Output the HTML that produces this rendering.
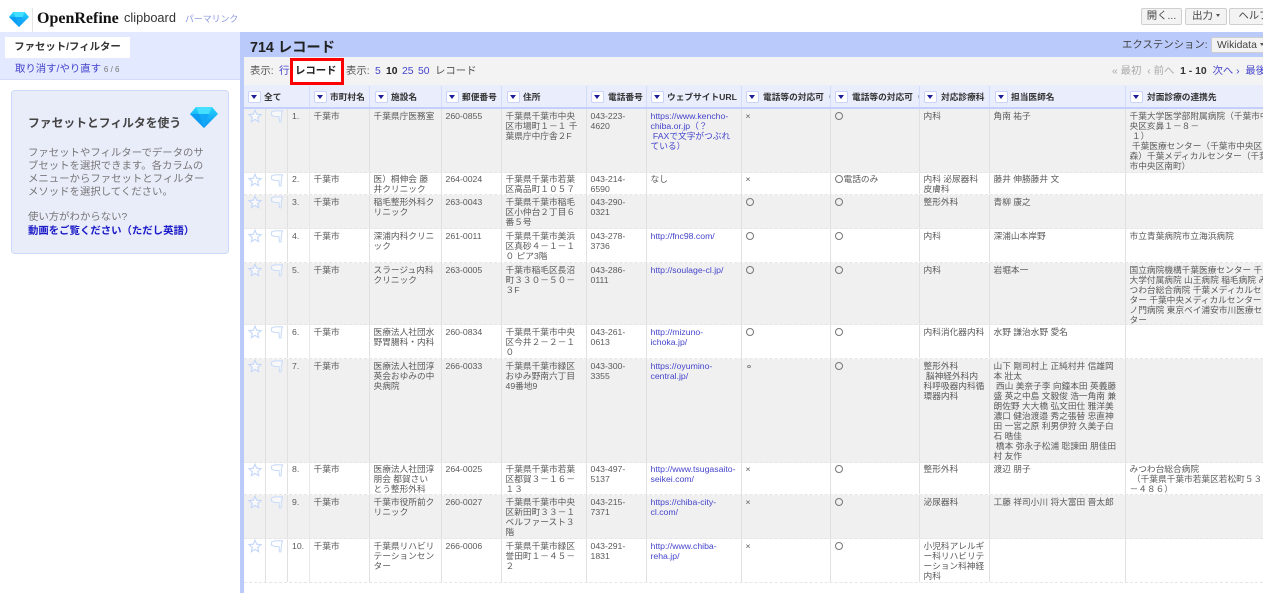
<!DOCTYPE html>
<html lang="ja">
<head>
<meta charset="utf-8">
<title>OpenRefine clipboard</title>
<style>
*{box-sizing:border-box}
html,body{margin:0;padding:0;width:1263px;height:593px;overflow:hidden;background:#fff}
body{position:relative;font-family:"Liberation Sans","Noto Sans CJK JP",sans-serif;color:#444}
a{color:#4444cc;text-decoration:none}
.a{position:absolute;white-space:nowrap}
.btn{position:absolute;background:#f3f3f3;border:1px solid #cfcfcf;border-radius:2px;font-size:10.4px;line-height:16px;color:#444;white-space:nowrap;overflow:hidden;text-align:center}
.caret{display:inline-block;border:2.5px solid transparent;border-top:3px solid #555;border-bottom:0;vertical-align:2px;margin-left:3px}
.r{position:absolute;left:244px;width:1019px;border-bottom:1px dashed #e6e6e6;overflow:hidden}
.g{background:#f0f0f0}
.r>span{position:absolute;top:0;bottom:0;font-size:8.7px;line-height:10px;padding:1.5px 0 0 3.5px;white-space:nowrap;overflow:hidden;color:#5a5a5a;border-right:1px solid #e0e0e0}
.t>span{padding-top:.5px}
.c1{left:0;width:22px}.c2{left:22px;width:22px}.c3{left:44px;width:22px}.c4{left:66px;width:60px}
.c5{left:126px;width:72px}.c6{left:198px;width:60px}.c7{left:258px;width:85px}.c8{left:343px;width:60px}
.c9{left:403px;width:95px}.c10{left:498px;width:89px}.c11{left:587px;width:89px}.c12{left:676px;width:70px}
.c13{left:746px;width:136px}.c14{left:882px;width:137px;border-right:0!important}
.r>.c3{border-right-color:#e8e8e8;padding-left:4px}
.r svg{position:absolute;left:3.5px;top:0;width:14px;height:14px}
.r>span.c1,.r>span.c2{padding:0}
.o{display:inline-block;width:8px;height:8px;border:1px solid #777;border-radius:50%;vertical-align:.5px;margin-right:1px;font-size:0}
.m{display:inline-block;width:4px;height:3px;border:1px solid #888;border-radius:50%;vertical-align:-2px;font-size:0;margin-left:1px}
.hd{position:absolute;top:85px;left:244px;width:1019px;height:24px;background:#e9edfc;border-bottom:2px solid #c3d0fb}
.hd b{position:absolute;top:1px;height:21px;border-right:1px solid #d3dcfb;font-size:8.7px;line-height:23px;color:#333;white-space:nowrap;overflow:hidden;font-weight:700}
.hd i{position:absolute;left:4px;top:5px;width:13px;height:12px;background:#fff;border:1px solid #c9d3fb;border-radius:2px}
.hd i:after{content:"";position:absolute;left:2px;top:3px;border:3.5px solid transparent;border-top:4px solid #1c1c99;border-bottom:0}
.hd em{position:absolute;left:21px;top:0;font-style:normal}
</style>
</head>
<body>
<svg width="0" height="0" style="position:absolute">
<defs>
<linearGradient id="gm" x1="0" y1="0" x2="0" y2="1"><stop offset="0" stop-color="#25d4ff"/><stop offset="1" stop-color="#0a8ff0"/></linearGradient>
<symbol id="gem" viewBox="0 0 28 21"><polygon points="6,0 22,0 28,7 14,21 0,7" fill="url(#gm)"/><polygon points="6,0 22,0 19,7 9,7" fill="#45e0ff"/><polygon points="9,7 19,7 14,21" fill="#12a8f7"/><polygon points="0,7 9,7 14,21" fill="#0d9cf4"/></symbol>
<symbol id="star" viewBox="0 0 14 14"><path d="M7 1.2 8.7 5.2 13 5.6 9.7 8.4 10.7 12.7 7 10.4 3.3 12.7 4.3 8.4 1 5.6 5.3 5.2Z" fill="#fff" fill-opacity=".55" stroke="#c4d6fa" stroke-width="1.1"/></symbol>
<symbol id="flag" viewBox="0 0 14 14"><path d="M1.5 3 5 1.8H12.5L11.5 5.5 11 12.8H9.5L9 7.5H4.5L1.5 6Z" fill="#fff" fill-opacity=".55" stroke="#cbdcfa" stroke-width="1.1"/></symbol>
</defs>
</svg>

<!-- top bar -->
<svg class="a" style="left:9px;top:12px" width="20" height="15"><use href="#gem" width="20" height="15"/></svg>
<div class="a" style="left:32px;top:8px;width:1px;height:24px;background:#e4e4e4"></div>
<div class="a" style="left:37px;top:10px;font:bold 16px/18px 'Liberation Serif',serif;color:#111">OpenRefine</div>
<div class="a" style="left:124px;top:10px;font-size:12.8px;line-height:16px;color:#333">clipboard</div>
<div class="a" style="left:185px;top:13px;font-size:8.9px;line-height:12px;color:#8a98dd">パーマリンク</div>
<div class="btn" style="left:1141px;top:8px;width:41px;height:17px">開く...</div>
<div class="btn" style="left:1185px;top:8px;width:42px;height:17px">出力<span class="caret"></span></div>
<div class="btn" style="left:1229px;top:8px;width:50px;height:17px">ヘルプ</div>

<!-- left panel -->
<div class="a" style="left:0;top:32px;width:240px;height:48px;background:#e3e9fe;border-bottom:1px solid #d3dbfa"></div>
<div class="a" style="left:5px;top:37px;width:125px;height:21px;background:#fff;font-size:10.4px;font-weight:700;line-height:22px;text-align:center;color:#333">ファセット/フィルター</div>
<div class="a" style="left:15px;top:62px;font-size:10.4px;line-height:15px"><a>取り消す/やり直す</a> <span style="font-size:8px;color:#777">6 / 6</span></div>
<div class="a" style="left:11px;top:90px;width:218px;height:164px;background:#e9ecf9;border:1px solid #ccd6fb;border-radius:4px"></div>
<div class="a" style="left:28px;top:115px;font-size:11.8px;font-weight:700;line-height:16px;color:#444">ファセットとフィルタを使う</div>
<svg class="a" style="left:190px;top:107px" width="28" height="21"><use href="#gem" width="28" height="21"/></svg>
<div class="a" style="left:28px;top:146.5px;font-size:10.4px;line-height:13.3px;color:#777">ファセットやフィルターでデータのサ<br>ブセットを選択できます。各カラムの<br>メニューからファセットとフィルター<br>メソッドを選択してください。</div>
<div class="a" style="left:28px;top:211px;font-size:10.4px;line-height:14px;color:#777">使い方がわからない?<br><a style="font-weight:700;color:#1a1ac8">動画をご覧ください（ただし英語）</a></div>

<!-- right panel -->
<div class="a" style="left:240px;top:32px;width:4px;height:561px;background:#b9cafb"></div>
<div class="a" style="left:240px;top:32px;width:1023px;height:25px;background:#b9cafb"></div>
<div class="a" style="left:250px;top:39px;font-size:14.3px;font-weight:700;line-height:18px;color:#222">714 レコード</div>
<div class="a" style="left:1122px;top:39px;font-size:10.4px;line-height:14px;color:#444">エクステンション:</div>
<div class="btn" style="left:1211px;top:37px;width:60px;height:16px;text-align:left;padding-left:5px">Wikidata<span class="caret"></span></div>
<div class="a" style="left:244px;top:57px;width:1019px;height:28px;background:#f3f3f3"></div>
<div class="a" style="left:250px;top:65px;font-size:10.4px;line-height:14px;color:#555">表示:</div>
<div class="a" style="left:279px;top:65px;font-size:10.4px;line-height:14px"><a>行</a></div>
<div class="a" style="left:290px;top:58px;width:54px;height:27px;background:#fff;border:3px solid #f00;font-size:10.4px;font-weight:700;line-height:22px;padding-left:2px;color:#222">レコード</div>
<div class="a" style="left:346px;top:65px;font-size:10.4px;line-height:14px;color:#555">表示:</div>
<div class="a" style="left:375px;top:65px;font-size:10.4px;line-height:14px"><a>5</a></div>
<div class="a" style="left:386px;top:65px;font-size:10.4px;line-height:14px;font-weight:700;color:#222">10</div>
<div class="a" style="left:402px;top:65px;font-size:10.4px;line-height:14px"><a>25</a></div>
<div class="a" style="left:418px;top:65px;font-size:10.4px;line-height:14px"><a>50</a></div>
<div class="a" style="left:435px;top:65px;font-size:10.4px;line-height:14px;color:#555">レコード</div>
<div class="a" style="left:1112px;top:65px;font-size:10.4px;line-height:14px;color:#aaa">« 最初 &nbsp;‹ 前へ &nbsp;<b style="color:#333">1 - 10</b> &nbsp;<a>次へ ›</a> &nbsp;<a>最後 »</a></div>

<!-- table header -->
<div class="hd">
<b style="left:0;width:66px"><i></i><em style="left:20px">全て</em></b>
<b style="left:66px;width:60px"><i></i><em style="left:20px">市町村名</em></b>
<b style="left:126px;width:72px"><i style="left:5px"></i><em>施設名</em></b>
<b style="left:198px;width:60px"><i></i><em style="left:20px">郵便番号</em></b>
<b style="left:258px;width:85px"><i style="left:5px"></i><em>住所</em></b>
<b style="left:343px;width:60px"><i></i><em>電話番号</em></b>
<b style="left:403px;width:95px"><i></i><em style="left:20px">ウェブサイトURL</em></b>
<b style="left:498px;width:89px"><i></i><em>電話等の対応可（</em></b>
<b style="left:587px;width:89px"><i></i><em>電話等の対応可（</em></b>
<b style="left:676px;width:70px"><i></i><em>対応診療科</em></b>
<b style="left:746px;width:136px"><i style="left:5px"></i><em>担当医師名</em></b>
<b style="left:882px;width:137px;border:0"><i></i><em>対面診療の連携先</em></b>
</div>

<!-- rows -->
<div class="r g" style="top:109px;height:64px">
<span class="c1"><svg><use href="#star"/></svg></span><span class="c2"><svg><use href="#flag"/></svg></span><span class="c3">1.</span><span class="c4">千葉市</span><span class="c5">千葉県庁医務室</span><span class="c6">260-0855</span><span class="c7">千葉県千葉市中央<br>区市場町１－１ 千<br>葉県庁中庁舎２F</span><span class="c8">043-223-<br>4620</span><span class="c9"><a>https://www.kencho-<br>chiba.or.jp（？<br>&nbsp;FAXで文字がつぶれ<br>ている）</a></span><span class="c10">×</span><span class="c11"><span class="o">○</span></span><span class="c12">内科</span><span class="c13">角南 祐子</span><span class="c14">千葉大学医学部附属病院（千葉市中<br>央区亥鼻１－８－<br>&nbsp;１）<br>&nbsp;千葉医療センター（千葉市中央区<br>森）千葉メディカルセンター（千葉<br>市中央区南町）</span>
</div>
<div class="r t" style="top:173px;height:22px">
<span class="c1"><svg><use href="#star"/></svg></span><span class="c2"><svg><use href="#flag"/></svg></span><span class="c3">2.</span><span class="c4">千葉市</span><span class="c5">医）桐伸会 藤<br>井クリニック</span><span class="c6">264-0024</span><span class="c7">千葉県千葉市若葉<br>区高品町１０５７</span><span class="c8">043-214-<br>6590</span><span class="c9">なし</span><span class="c10">×</span><span class="c11"><span class="o">○</span>電話のみ</span><span class="c12">内科 泌尿器科<br>皮膚科</span><span class="c13">藤井 伸勝藤井 文</span><span class="c14"></span>
</div>
<div class="r g" style="top:195px;height:34px">
<span class="c1"><svg><use href="#star"/></svg></span><span class="c2"><svg><use href="#flag"/></svg></span><span class="c3">3.</span><span class="c4">千葉市</span><span class="c5">稲毛整形外科ク<br>リニック</span><span class="c6">263-0043</span><span class="c7">千葉県千葉市稲毛<br>区小仲台２丁目６<br>番５号</span><span class="c8">043-290-<br>0321</span><span class="c9"></span><span class="c10"><span class="o">○</span></span><span class="c11"><span class="o">○</span></span><span class="c12">整形外科</span><span class="c13">青柳 康之</span><span class="c14"></span>
</div>
<div class="r" style="top:229px;height:34px">
<span class="c1"><svg><use href="#star"/></svg></span><span class="c2"><svg><use href="#flag"/></svg></span><span class="c3">4.</span><span class="c4">千葉市</span><span class="c5">深浦内科クリニ<br>ック</span><span class="c6">261-0011</span><span class="c7">千葉県千葉市美浜<br>区真砂４－１－１<br>０ ピア3階</span><span class="c8">043-278-<br>3736</span><span class="c9"><a>http://fnc98.com/</a></span><span class="c10"><span class="o">○</span></span><span class="c11"><span class="o">○</span></span><span class="c12">内科</span><span class="c13">深浦山本岸野</span><span class="c14">市立青葉病院市立海浜病院</span>
</div>
<div class="r g" style="top:263px;height:62px">
<span class="c1"><svg><use href="#star"/></svg></span><span class="c2"><svg><use href="#flag"/></svg></span><span class="c3">5.</span><span class="c4">千葉市</span><span class="c5">スラージュ内科<br>クリニック</span><span class="c6">263-0005</span><span class="c7">千葉市稲毛区長沼<br>町３３０－５０－<br>３F</span><span class="c8">043-286-<br>0111</span><span class="c9"><a>http://soulage-cl.jp/</a></span><span class="c10"><span class="o">○</span></span><span class="c11"><span class="o">○</span></span><span class="c12">内科</span><span class="c13">岩堀本一</span><span class="c14">国立病院機構千葉医療センター 千<br>大学付属病院 山王病院 稲毛病院 み<br>つわ台総合病院 千葉メディカルセン<br>ター 千葉中央メディカルセンター 虎<br>ノ門病院 東京ベイ浦安市川医療セン<br>ター</span>
</div>
<div class="r" style="top:325px;height:34px">
<span class="c1"><svg><use href="#star"/></svg></span><span class="c2"><svg><use href="#flag"/></svg></span><span class="c3">6.</span><span class="c4">千葉市</span><span class="c5">医療法人社団水<br>野胃腸科・内科</span><span class="c6">260-0834</span><span class="c7">千葉県千葉市中央<br>区今井２－２－１<br>０</span><span class="c8">043-261-<br>0613</span><span class="c9"><a>http://mizuno-<br>ichoka.jp/</a></span><span class="c10"><span class="o">○</span></span><span class="c11"><span class="o">○</span></span><span class="c12">内科消化器内科</span><span class="c13">水野 謙治水野 愛名</span><span class="c14"></span>
</div>
<div class="r g" style="top:359px;height:104px">
<span class="c1"><svg><use href="#star"/></svg></span><span class="c2"><svg><use href="#flag"/></svg></span><span class="c3">7.</span><span class="c4">千葉市</span><span class="c5">医療法人社団淳<br>英会おゆみの中<br>央病院</span><span class="c6">266-0033</span><span class="c7">千葉県千葉市緑区<br>おゆみ野南六丁目<br>49番地9</span><span class="c8">043-300-<br>3355</span><span class="c9"><a>https://oyumino-<br>central.jp/</a></span><span class="c10"><span class="m">○</span></span><span class="c11"><span class="o">○</span></span><span class="c12">整形外科<br>&nbsp;脳神経外科内<br>科呼吸器内科循<br>環器内科</span><span class="c13">山下 剛司村上 正純村井 信雄岡<br>本 壯太<br>&nbsp;西山 美奈子李 向鐘本田 英義藤<br>盛 英之中島 文毅俊 浩一角南 兼<br>朗佐野 大大橋 弘文田仕 雅洋美<br>濃口 健治渡邉 秀之張替 忠直神<br>田 一宮之原 利男伊狩 久美子白<br>石 晧佳<br>&nbsp;橋本 弥永子松浦 聡諫田 朋佳田<br>村 友作</span><span class="c14"></span>
</div>
<div class="r t" style="top:463px;height:32px">
<span class="c1"><svg><use href="#star"/></svg></span><span class="c2"><svg><use href="#flag"/></svg></span><span class="c3">8.</span><span class="c4">千葉市</span><span class="c5">医療法人社団淳<br>朋会 都賀さい<br>とう整形外科</span><span class="c6">264-0025</span><span class="c7">千葉県千葉市若葉<br>区都賀３－１６－<br>１３</span><span class="c8">043-497-<br>5137</span><span class="c9"><a>http://www.tsugasaito-<br>seikei.com/</a></span><span class="c10">×</span><span class="c11"><span class="o">○</span></span><span class="c12">整形外科</span><span class="c13">渡辺 朋子</span><span class="c14">みつわ台総合病院<br>&nbsp;（千葉県千葉市若葉区若松町５３<br>－４８６）</span>
</div>
<div class="r g" style="top:495px;height:44px">
<span class="c1"><svg><use href="#star"/></svg></span><span class="c2"><svg><use href="#flag"/></svg></span><span class="c3">9.</span><span class="c4">千葉市</span><span class="c5">千葉市役所前ク<br>リニック</span><span class="c6">260-0027</span><span class="c7">千葉県千葉市中央<br>区新田町３３－１<br>ベルファースト３<br>階</span><span class="c8">043-215-<br>7371</span><span class="c9"><a>https://chiba-city-<br>cl.com/</a></span><span class="c10">×</span><span class="c11"><span class="o">○</span></span><span class="c12">泌尿器科</span><span class="c13">工藤 祥司小川 将大富田 晋太郎</span><span class="c14"></span>
</div>
<div class="r" style="top:539px;height:44px">
<span class="c1"><svg><use href="#star"/></svg></span><span class="c2"><svg><use href="#flag"/></svg></span><span class="c3">10.</span><span class="c4">千葉市</span><span class="c5">千葉県リハビリ<br>テーションセン<br>ター</span><span class="c6">266-0006</span><span class="c7">千葉県千葉市緑区<br>誉田町１－４５－<br>２</span><span class="c8">043-291-<br>1831</span><span class="c9"><a>http://www.chiba-<br>reha.jp/</a></span><span class="c10">×</span><span class="c11"><span class="o">○</span></span><span class="c12">小児科アレルギ<br>ー科リハビリテ<br>ーション科神経<br>内科</span><span class="c13"></span><span class="c14"></span>
</div>
</body>
</html>
